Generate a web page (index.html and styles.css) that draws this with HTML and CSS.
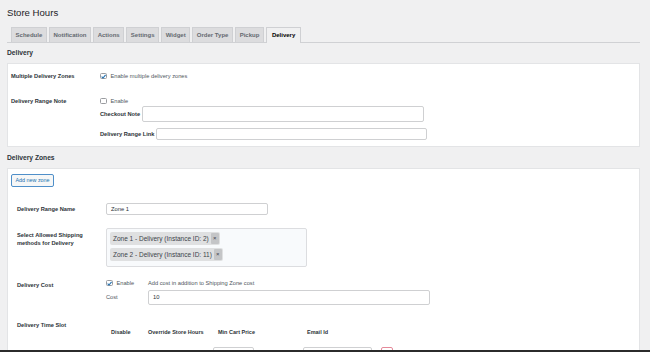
FILE: index.html
```html
<!DOCTYPE html>
<html lang="en">
<head>
<meta charset="utf-8">
<title>Store Hours</title>
<link rel="stylesheet" href="styles.css">
</head>
<body>
<div class="wrap">
  <h1 class="title">Store Hours</h1>
  <nav class="tabs">
    <span class="tab">Schedule</span>
    <span class="tab">Notification</span>
    <span class="tab">Actions</span>
    <span class="tab">Settings</span>
    <span class="tab">Widget</span>
    <span class="tab">Order Type</span>
    <span class="tab">Pickup</span>
    <span class="tab active">Delivery</span>
  </nav>

  <h2 class="section">Delivery</h2>
  <div class="card card-one">
    <div class="row">
      <div class="label">Multiple Delivery Zones</div>
      <div class="field">
        <label class="check"><span class="cb checked"><svg viewBox="0 0 7 7"><path d="M1.6 3.6 L3 5 L5.6 1.8" fill="none" stroke="#2271b1" stroke-width="1.1"/></svg></span>Enable multiple delivery zones</label>
      </div>
    </div>
    <div class="row row-note">
      <div class="label">Delivery Range Note</div>
      <div class="field">
        <label class="check"><span class="cb"></span>Enable</label>
        <div class="inline inline-checkout"><span class="sublabel">Checkout Note</span><span class="input input-checkout"></span></div>
        <div class="inline inline-link"><span class="sublabel">Delivery Range Link</span><span class="input input-link"></span></div>
      </div>
    </div>
  </div>

  <h2 class="section section-zones">Delivery Zones</h2>
  <div class="card card-two">
    <button class="btn">Add new zone</button>
    <div class="zone">
      <div class="row row-name">
        <div class="label">Delivery Range Name</div>
        <div class="field"><span class="input input-name">Zone 1</span></div>
      </div>
      <div class="row row-ship">
        <div class="label label-two">Select Allowed Shipping methods for Delivery</div>
        <div class="field">
          <div class="select">
            <span class="chip">Zone 1 - Delivery (Instance ID: 2)<span class="x">×</span></span>
            <span class="chip">Zone 2 - Delivery (Instance ID: 11)<span class="x">×</span></span>
          </div>
        </div>
      </div>
      <div class="row row-cost">
        <div class="label label-cost">Delivery Cost</div>
        <div class="field cost-grid">
          <label class="check"><span class="cb checked"><svg viewBox="0 0 7 7"><path d="M1.6 3.6 L3 5 L5.6 1.8" fill="none" stroke="#2271b1" stroke-width="1.1"/></svg></span>Enable</label>
          <span class="hint">Add cost in addition to Shipping Zone cost</span>
          <span class="sublabel cost-label">Cost</span>
          <span class="input input-cost">10</span>
        </div>
      </div>
      <div class="row row-slot">
        <div class="label">Delivery Time Slot</div>
        <div class="field slot">
          <span class="th th-disable">Disable</span>
          <span class="th th-override">Override Store Hours</span>
          <span class="th th-min">Min Cart Price</span>
          <span class="th th-email">Email Id</span>
          <span class="td td-cb1"><span class="cb"></span></span>
          <span class="td td-cb2"><span class="cb"></span></span>
          <span class="td"><span class="input input-min"></span></span>
          <span class="td"><span class="input input-email"></span></span>
          <span class="td"><span class="del"></span></span>
        </div>
      </div>
    </div>
  </div>
</div>
<div class="screen-edge"></div>
</body>
</html>
```

FILE: styles.css
```css
* { box-sizing: border-box; }
html, body { margin: 0; padding: 0; }
body {
  background: #f0f0f1;
  font-family: "Liberation Sans", Arial, sans-serif;
  color: #1d2327;
  width: 650px;
  height: 352px;
  overflow: hidden;
}
.wrap { padding: 0 10px 0 7px; height: 352px; overflow: hidden; }

.title {
  margin: 7px 0 8px 0;
  font-size: 9.6px;
  line-height: 12px;
  font-weight: 400;
  color: #1d2327;
}

.tabs {
  display: flex;
  gap: 2px;
  padding-left: 4px;
  height: 16px;
  border-bottom: 1px solid #d0d1d4;
}
.tab {
  height: 15px;
  padding: 0 3.6px;
  border: 1px solid #cfd0d3;
  border-bottom: none;
  background: #dcdcde;
  font-size: 6px;
  font-weight: 700;
  line-height: 14px;
  color: #646970;
}
.tab.active {
  background: #f0f0f1;
  color: #000;
  height: 16px;
  padding: 0 5px;
}

.section {
  margin: 5px 0 5px 0;
  font-size: 6.7px;
  line-height: 10px;
  font-weight: 700;
  color: #2c3338;
}
.section-zones { margin-top: 6px; }

.card {
  background: #fff;
  border: 1px solid #e3e4e6;
}
.card-one { padding: 8px 0 6px 3px; }
.card-two { padding: 5px 0 0 3px; height: 200px; }

.row {
  display: grid;
  grid-template-columns: 89px 1fr;
}
.label {
  font-size: 5.7px;
  font-weight: 700;
  line-height: 8px;
  color: #2c3338;
}
.field { font-size: 5.7px; line-height: 8px; color: #50575e; }
.row-note { margin-top: 17px; }

.check { display: flex; align-items: center; gap: 4px; height: 8px; }
.cb {
  display: inline-block;
  width: 6.5px;
  height: 6.5px;
  border: 1px solid #9a9ca0;
  border-radius: 1.5px;
  background: #fff;
  position: relative;
  flex: none;
}
.cb svg { position: absolute; left: -1px; top: -1px; width: 7px; height: 7px; }

.inline { display: flex; align-items: center; gap: 2px; }
.sublabel { font-weight: 700; color: #2c3338; font-size: 5.7px; }
.inline-checkout { margin-top: 1px; height: 16px; }
.inline-link { margin-top: 6px; height: 12px; }

.input {
  display: block;
  border: 1px solid #cfd0d2;
  border-radius: 2px;
  background: #fff;
  font-size: 5.8px;
  color: #2c3338;
  padding-left: 4px;
}
.input-checkout { width: 282px; height: 16px; }
.input-link { width: 271px; height: 12px; }

.btn {
  display: block;
  margin: 0;
  width: 43px;
  height: 13px;
  padding: 0;
  border: 1px solid #4f8fc9;
  border-radius: 2px;
  background: #f6f7f7;
  color: #2271b1;
  font-family: "Liberation Sans", Arial, sans-serif;
  font-size: 5.4px;
  line-height: 11px;
}

.zone { padding-left: 6px; margin-top: 16px; }
.row-name .label { line-height: 12px; }
.input-name { width: 162px; height: 12px; line-height: 10px; }

.row-ship { margin-top: 13px; }
.label-two { padding-top: 3px; }
.select {
  width: 201px;
  height: 39px;
  border: 1px solid #dcdde0;
  border-radius: 2px;
  background: #f8fafc;
  padding: 3px 3px;
  display: flex;
  flex-direction: column;
  align-items: flex-start;
  gap: 3px;
}
.chip {
  display: inline-flex;
  align-items: center;
  height: 13px;
  padding-left: 3px;
  padding-right: 1px;
  gap: 2px;
  background: #dfe0e1;
  border-radius: 2px;
  font-size: 6.5px;
  color: #3c434a;
}
.x {
  display: inline-block;
  width: 8px;
  height: 11px;
  background: #c4c5c7;
  border-radius: 1px;
  font-size: 6px;
  line-height: 11px;
  text-align: center;
  color: #3c434a;
}

.row-cost { margin-top: 12px; }
.label-cost { padding-top: 2px; }
.cost-grid {
  display: grid;
  grid-template-columns: 42px 1fr;
  row-gap: 3px;
}
.hint { color: #50575e; }
.cost-label { font-weight: 400; color: #50575e; line-height: 15px; }
.input-cost { width: 282px; height: 15px; line-height: 13px; }

.row-slot { margin-top: 16px; }
.slot {
  display: grid;
  grid-template-columns: 42px 65px 90px 78px 12px;
  grid-template-rows: 8px auto;
  row-gap: 11px;
  padding-top: 7px;
}
.th { font-weight: 700; color: #2c3338; white-space: nowrap; font-size: 5.5px; }
.th-disable { padding-left: 5px; }
.th-min { padding-left: 5px; }
.th-email { padding-left: 4px; grid-column: 4 / span 2; }
.td-cb1 { padding-left: 2px; padding-top: 3px; }
.td-cb2 { padding-left: 26px; padding-top: 3px; }
.input-min { width: 41px; height: 12px; }
.input-email { width: 69px; height: 12px; }
.del {
  display: block;
  width: 12px;
  height: 12px;
  border: 1px solid #e58a9a;
  border-radius: 2px;
  background: #fff;
}

.screen-edge {
  position: fixed;
  left: 0;
  right: 0;
  bottom: 0;
  height: 2px;
  background: #2b2b2b;
}
```
